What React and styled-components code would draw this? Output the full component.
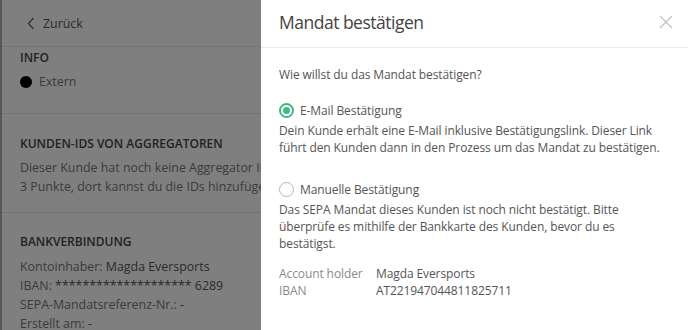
import React, { useState } from "react";
import styled, { createGlobalStyle } from "styled-components";

const GlobalStyle = createGlobalStyle`
  html, body {
    margin: 0;
    padding: 0;
    background: #fff;
  }
  body {
    font-family: "Open Sans", "Liberation Sans", sans-serif;
    font-size: 12.4px;
    color: #555;
  }
  * {
    box-sizing: border-box;
  }
`;

const Screen = styled.div`
  position: relative;
  width: 688px;
  height: 330px;
  overflow: hidden;
`;

const Page = styled.div`
  width: 520px;
  height: 100%;
  border-left: 2px solid #b0b0b0;
  background: #fff;
`;

const TopBar = styled.div`
  height: 47px;
  display: flex;
  align-items: center;
  gap: 8px;
  padding-left: 25px;
  border-bottom: 1px solid #e6e6e6;
  color: #555;
`;

const Section = styled.div`
  padding: ${(p) => p.$pad || "20px 18px 16px"};
  border-bottom: ${(p) => (p.$last ? "none" : "1px solid #e6e6e6")};
`;

const SectionTitle = styled.div`
  font-size: 12px;
  font-weight: 600;
  color: #444;
  line-height: 19px;
  margin-bottom: ${(p) => p.$gap || "5px"};
  text-transform: uppercase;
`;

const Line = styled.div`
  line-height: 19px;
  color: #777;
  white-space: nowrap;
  span {
    color: #555;
  }
`;

const StatusRow = styled.div`
  display: flex;
  align-items: center;
  gap: 7px;
  line-height: 19px;
  color: #777;
`;

const Dot = styled.span`
  width: 12px;
  height: 12px;
  border-radius: 50%;
  background: #000;
`;

const Overlay = styled.div`
  position: absolute;
  inset: 0;
  background: rgba(0, 0, 0, 0.5);
`;

const Drawer = styled.div`
  position: absolute;
  top: 0;
  right: 0;
  bottom: 0;
  width: 427px;
  background: #fff;
  display: flex;
  flex-direction: column;
`;

const DrawerHeader = styled.div`
  height: 48px;
  display: flex;
  align-items: center;
  justify-content: space-between;
  padding: 0 15px 4px 18px;
  border-bottom: 1px solid #ececec;
`;

const DrawerTitle = styled.h2`
  margin: 0;
  font-size: 17.5px;
  letter-spacing: -0.5px;
  font-weight: 400;
  color: #444;
`;

const CloseButton = styled.button`
  border: none;
  background: none;
  padding: 0;
  width: 14px;
  height: 14px;
  cursor: pointer;
  display: flex;
`;

const DrawerBody = styled.div`
  padding: 18px 18px 0;
  font-size: 12px;
  letter-spacing: -0.1px;
  line-height: 17px;
`;

const Question = styled.p`
  margin: 0 0 19px;
  color: #555;
`;

const Option = styled.div`
  margin-bottom: ${(p) => p.$gap || "0"};
`;

const OptionLabel = styled.label`
  display: flex;
  align-items: center;
  gap: 6px;
  margin-bottom: 3px;
  color: #555;
  cursor: pointer;
`;

const Radio = styled.span`
  width: 15px;
  height: 15px;
  border-radius: 50%;
  border: ${(p) => (p.$checked ? "2px solid #3dba84" : "1px solid #b5b5b5")};
  display: flex;
  align-items: center;
  justify-content: center;
  &::after {
    content: "";
    width: 7px;
    height: 7px;
    border-radius: 50%;
    background: ${(p) => (p.$checked ? "#3dba84" : "transparent")};
  }
`;

const OptionText = styled.p`
  margin: 0;
  color: #555;
`;

const DataTable = styled.div`
  display: grid;
  grid-template-columns: 97px auto;
  margin-top: 14px;
  line-height: 16.5px;
`;

const DataLabel = styled.div`
  color: #8a8a8a;
`;

const DataValue = styled.div`
  color: #555;
`;

const ChevronLeft = () => (
  <svg width="8" height="13" viewBox="0 0 8 13">
    <path d="M6.5 1 L1.5 6.5 L6.5 12" fill="none" stroke="#666" strokeWidth="1.4" />
  </svg>
);

const CloseIcon = () => (
  <svg width="14" height="14" viewBox="0 0 14 14">
    <path d="M1 1 L13 13 M13 1 L1 13" stroke="#c4c4c4" strokeWidth="1.4" />
  </svg>
);

const App = () => {
  const [mode, setMode] = useState("email");

  return (
    <Screen>
      <GlobalStyle />
      <Page>
        <TopBar>
          <ChevronLeft />
          Zurück
        </TopBar>
        <Section $pad="1px 18px 22px">
          <SectionTitle>Info</SectionTitle>
          <StatusRow>
            <Dot />
            Extern
          </StatusRow>
        </Section>
        <Section>
          <SectionTitle>Kunden-IDs von Aggregatoren</SectionTitle>
          <Line>Dieser Kunde hat noch keine Aggregator IDs. Klicke auf die</Line>
          <Line>3 Punkte, dort kannst du die IDs hinzufügen.</Line>
        </Section>
        <Section $pad="19px 18px 0" $last>
          <SectionTitle $gap="6px">Bankverbindung</SectionTitle>
          <Line>
            Kontoinhaber: <span>Magda Eversports</span>
          </Line>
          <Line>
            IBAN: <span>******************** 6289</span>
          </Line>
          <Line>
            SEPA-Mandatsreferenz-Nr.: <span>-</span>
          </Line>
          <Line>
            Erstellt am: <span>-</span>
          </Line>
        </Section>
      </Page>
      <Overlay />
      <Drawer>
        <DrawerHeader>
          <DrawerTitle>Mandat bestätigen</DrawerTitle>
          <CloseButton aria-label="Schließen">
            <CloseIcon />
          </CloseButton>
        </DrawerHeader>
        <DrawerBody>
          <Question>Wie willst du das Mandat bestätigen?</Question>
          <Option $gap="25px">
            <OptionLabel onClick={() => setMode("email")}>
              <Radio $checked={mode === "email"} />
              E-Mail Bestätigung
            </OptionLabel>
            <OptionText>
              Dein Kunde erhält eine E-Mail inklusive Bestätigungslink. Dieser Link
              führt den Kunden dann in den Prozess um das Mandat zu bestätigen.
            </OptionText>
          </Option>
          <Option>
            <OptionLabel onClick={() => setMode("manual")}>
              <Radio $checked={mode === "manual"} />
              Manuelle Bestätigung
            </OptionLabel>
            <OptionText>
              Das SEPA Mandat dieses Kunden ist noch nicht bestätigt. Bitte
              überprüfe es mithilfe der Bankkarte des Kunden, bevor du es
              bestätigst.
            </OptionText>
          </Option>
          <DataTable>
            <DataLabel>Account holder</DataLabel>
            <DataValue>Magda Eversports</DataValue>
            <DataLabel>IBAN</DataLabel>
            <DataValue>AT221947044811825711</DataValue>
          </DataTable>
        </DrawerBody>
      </Drawer>
    </Screen>
  );
};

export default App;
